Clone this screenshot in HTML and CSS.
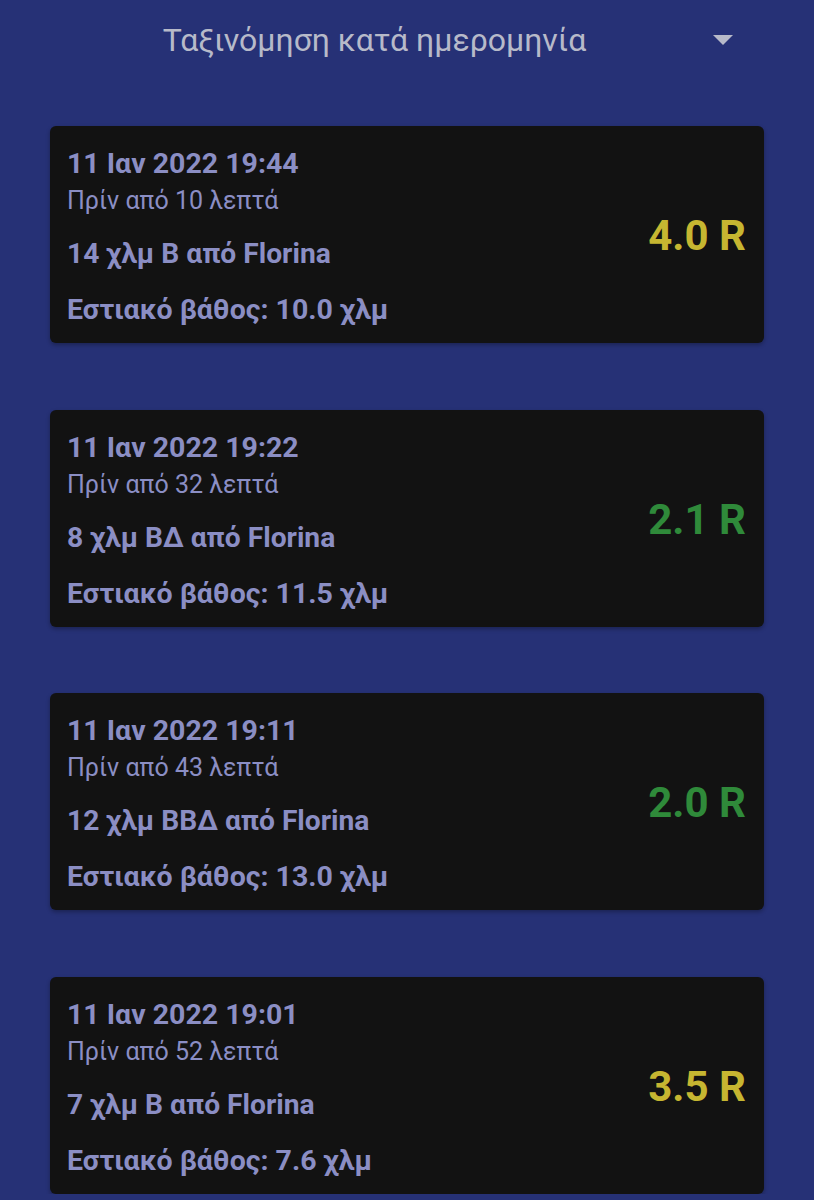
FILE: index.html
```html
<!DOCTYPE html>
<html lang="el">
<head>
  <meta charset="UTF-8">
  <title>Σεισμοί</title>
  <link rel="stylesheet" href="styles.css">
</head>
<body>

  <div class="sort-bar">
    <span class="sort-label">Ταξινόμηση κατά ημερομηνία</span>
    <span class="sort-arrow"></span>
  </div>

  <div class="quake-list">
    <div class="quake">
      <div class="info">
        <div class="date">11 Ιαν 2022 19:44</div>
        <div class="ago">Πρίν από 10 λεπτά</div>
        <div class="place">14 χλμ Β από Florina</div>
        <div class="depth">Εστιακό βάθος: 10.0 χλμ</div>
      </div>
      <div class="mag mid">4.0 R</div>
    </div>

    <div class="quake">
      <div class="info">
        <div class="date">11 Ιαν 2022 19:22</div>
        <div class="ago">Πρίν από 32 λεπτά</div>
        <div class="place">8 χλμ ΒΔ από Florina</div>
        <div class="depth">Εστιακό βάθος: 11.5 χλμ</div>
      </div>
      <div class="mag low">2.1 R</div>
    </div>

    <div class="quake">
      <div class="info">
        <div class="date">11 Ιαν 2022 19:11</div>
        <div class="ago">Πρίν από 43 λεπτά</div>
        <div class="place">12 χλμ ΒΒΔ από Florina</div>
        <div class="depth">Εστιακό βάθος: 13.0 χλμ</div>
      </div>
      <div class="mag low">2.0 R</div>
    </div>

    <div class="quake">
      <div class="info">
        <div class="date">11 Ιαν 2022 19:01</div>
        <div class="ago">Πρίν από 52 λεπτά</div>
        <div class="place">7 χλμ Β από Florina</div>
        <div class="depth">Εστιακό βάθος: 7.6 χλμ</div>
      </div>
      <div class="mag mid">3.5 R</div>
    </div>
  </div>

</body>
</html>
```

FILE: styles.css
```css
body {
  margin: 0;
  background: #263176;
  font-family: Roboto, "Noto Sans", sans-serif;
}

.sort-bar {
  display: flex;
  align-items: center;
  height: 80px;
  padding: 0 50px;
}

.sort-label {
  flex: 1;
  text-align: center;
  color: #b7bac9;
  font-size: 32px;
}

.sort-arrow {
  width: 65px;
  height: 10px;
  position: relative;
}

.sort-arrow::before {
  content: "";
  position: absolute;
  left: 14px;
  top: 0;
  border-left: 10px solid transparent;
  border-right: 10px solid transparent;
  border-top: 10px solid #b7bac9;
}

.quake-list {
  display: flex;
  flex-direction: column;
  gap: 66.5px;
  padding: 46px 50px 0;
}

.quake {
  display: flex;
  align-items: center;
  background: #121212;
  border-radius: 6px;
  padding: 20px 18px 16px 17px;
  box-shadow: 0 2px 4px rgba(0,0,0,0.3);
}

.info {
  flex: 1;
  color: #8b8ec4;
}

.date {
  font-size: 28.5px;
  font-weight: bold;
  line-height: 36px;
}

.ago {
  font-size: 25px;
  line-height: 38px;
}

.place {
  font-size: 28.2px;
  font-weight: bold;
  line-height: 34px;
  margin-top: 17px;
}

.depth {
  font-size: 28.5px;
  font-weight: bold;
  line-height: 34px;
  margin-top: 22px;
}

.mag {
  font-size: 42px;
  font-weight: bold;
  margin-top: -2px;
}

.mid {
  color: #c6b631;
}

.low {
  color: #2f8a3a;
}
```
